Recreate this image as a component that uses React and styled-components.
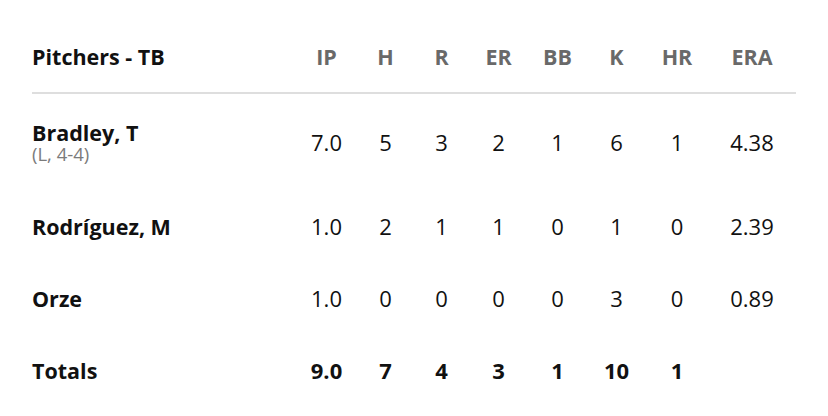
import React from "react";
import styled, { createGlobalStyle } from "styled-components";

const GlobalStyle = createGlobalStyle`
  body {
    margin: 0;
    background: #ffffff;
    font-family: "Open Sans", "Lato", sans-serif;
    color: #000000;
  }
`;

const COLS = "264px 61px 57px 55px 59px 59px 59px 62px 88px";

const pitchers = [
  { name: "Bradley, T", note: "(L, 4-4)", stats: ["7.0", "5", "3", "2", "1", "6", "1", "4.38"] },
  { name: "Rodríguez, M", stats: ["1.0", "2", "1", "1", "0", "1", "0", "2.39"] },
  { name: "Orze", stats: ["1.0", "0", "0", "0", "0", "3", "0", "0.89"] },
];

const totals = ["9.0", "7", "4", "3", "1", "10", "1", ""];
const heads = ["IP", "H", "R", "ER", "BB", "K", "HR", "ERA"];

const App = () => {
  return (
    <Wrapper>
      <GlobalStyle />
      <HeadRow>
        <Title>Pitchers - TB</Title>
        {heads.map((h) => (
          <HeadCell key={h}>{h}</HeadCell>
        ))}
      </HeadRow>

      {pitchers.map((p) => (
        <Row key={p.name} tall={!!p.note}>
          <NameCell>
            <Name>{p.name}</Name>
            {p.note && <Note>{p.note}</Note>}
          </NameCell>
          {p.stats.map((s, i) => (
            <Stat key={i}>{s}</Stat>
          ))}
        </Row>
      ))}

      <Row>
        <NameCell>
          <Name>Totals</Name>
        </NameCell>
        {totals.map((s, i) => (
          <Stat key={i} bold>
            {s}
          </Stat>
        ))}
      </Row>
    </Wrapper>
  );
};

const Wrapper = styled.section`
  padding: 20px 32px 0 32px;
  width: 764px;
`;

const HeadRow = styled.div`
  display: grid;
  grid-template-columns: ${COLS};
  align-items: center;
  height: 72px;
  border-bottom: 2px solid #dedede;
`;

const Title = styled.div`
  font-size: 21.5px;
  font-weight: 700;
  color: #111111;
`;

const HeadCell = styled.div`
  text-align: center;
  font-size: 21.5px;
  font-weight: 700;
  color: #696969;
`;

const Row = styled.div`
  display: grid;
  grid-template-columns: ${COLS};
  align-items: center;
  height: ${(p) => (p.tall ? "96px" : "72px")};
`;

const NameCell = styled.div`
  display: flex;
  flex-direction: column;
`;

const Name = styled.span`
  font-size: 21.5px;
  line-height: 23px;
  font-weight: 700;
  color: #111111;
`;

const Note = styled.span`
  font-size: 18.5px;
  line-height: 20px;
  color: #7b7b7b;
`;

const Stat = styled.div`
  text-align: center;
  font-size: 22px;
  font-weight: ${(p) => (p.bold ? 700 : 400)};
  color: #111111;
`;

export default App;
